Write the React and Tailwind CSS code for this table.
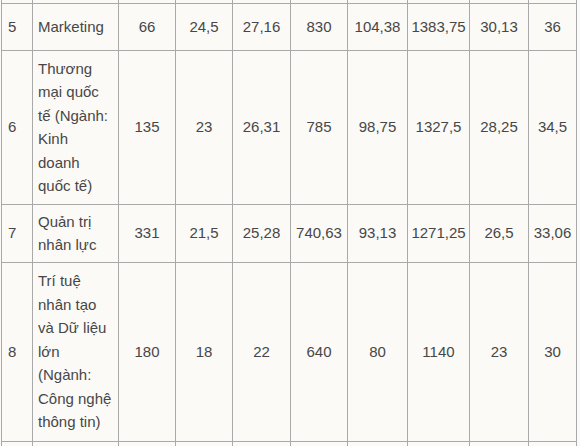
import React from 'react';

const rows = [
    { stt: '5', nganh: ['Marketing'], vals: ['66', '24,5', '27,16', '830', '104,38', '1383,75', '30,13', '36'], h: 'h-[47px]' },
    {
        stt: '6',
        nganh: ['Thương', 'mại quốc', 'tế (Ngành:', 'Kinh', 'doanh', 'quốc tế)'],
        vals: ['135', '23', '26,31', '785', '98,75', '1327,5', '28,25', '34,5'],
        h: 'h-[154px]',
    },
    { stt: '7', nganh: ['Quản trị', 'nhân lực'], vals: ['331', '21,5', '25,28', '740,63', '93,13', '1271,25', '26,5', '33,06'], h: 'h-[58px]' },
    {
        stt: '8',
        nganh: ['Trí tuệ', 'nhân tạo', 'và Dữ liệu', 'lớn', '(Ngành:', 'Công nghệ', 'thông tin)'],
        vals: ['180', '18', '22', '640', '80', '1140', '23', '30'],
        h: 'h-[179px]',
    },
];

const widths = ['w-[31px]', 'w-[86px]', 'w-[57px]', 'w-[57px]', 'w-[58px]', 'w-[57px]', 'w-[60px]', 'w-[62px]', 'w-[59px]', 'w-[48px]'];

const App = () => {
    return (
        <div className="w-[580px] h-[446px] overflow-hidden bg-[#fbfaf7] pl-[1px] font-['Liberation_Sans',Arial,sans-serif] text-[15px] leading-[23.5px] text-[#474747]">
            <table className="table-fixed border-collapse w-[576px]">
                <colgroup>
                    {widths.map((w, i) => (
                        <col key={i} className={w} />
                    ))}
                </colgroup>
                <tbody>
                    {/* phần cuối của dòng trước */}
                    <tr className="h-[3px]">
                        {widths.map((w, i) => (
                            <td key={i} className="border border-t-0 border-[#a9a9a9] p-0"></td>
                        ))}
                    </tr>
                    {rows.map((r) => (
                        <tr key={r.stt} className={r.h}>
                            <td className="border border-[#a9a9a9] px-[6px] align-middle">{r.stt}</td>
                            <td className="border border-[#a9a9a9] px-[5px] align-middle">
                                {r.nganh.map((l, i) => (
                                    <div key={i} className="whitespace-nowrap">{l}</div>
                                ))}
                            </td>
                            {r.vals.map((v, i) => (
                                <td key={i} className="border border-[#a9a9a9] px-0 text-center align-middle whitespace-nowrap">
                                    {v}
                                </td>
                            ))}
                        </tr>
                    ))}
                    <tr className="h-[20px]">
                        {widths.map((w, i) => (
                            <td key={i} className="border border-[#a9a9a9] p-0"></td>
                        ))}
                    </tr>
                </tbody>
            </table>
        </div>
    );
};

export default App;
